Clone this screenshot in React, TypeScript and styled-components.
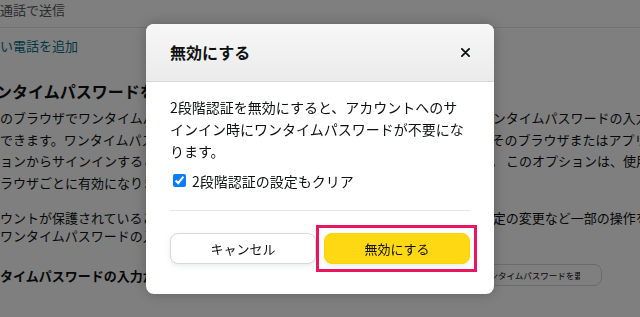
import React from 'react';
import styled, { createGlobalStyle, css } from 'styled-components';

const GlobalStyle = createGlobalStyle`
    html, body {
        margin: 0;
        padding: 0;
        background: #ffffff;
    }
    body {
        font-family: "Noto Sans CJK JP", "Liberation Sans", sans-serif;
        color: #0f1111;
        overflow: hidden;
    }
`;

const para1 = [
    'このブラウザでワンタイムパスワードを入力して認証すると、次回のサインインではワンタイムパスワードの入力を省',
    '略できます。ワンタイムパスワードの入力が不要になるため、次回からもスムーズに、そのブラウザまたはアプリケー',
    'ションからサインインするときに、ワンタイムパスワード( OTP)の入力が省略されます。 このオプションは、使用するブラウザ',
    'ブラウザごとに有効になります。',
];

const para2 = [
    'アカウントが保護されていることを確認するため、パスワードや各種セキュリティ関連設定の変更など一部の操作を行う際には',
    '前にワンタイムパスワードの入力が必要です。',
];

export default function App() {
    return (
        <>
            <GlobalStyle />
            <Page>
                <Content>
                    <TopRow>
                        <Line $shift={-13}>音声通話で送信</Line>
                    </TopRow>
                    <AddLink $shift={-13}>新しい電話を追加</AddLink>
                    <Heading $shift={-7}>ワンタイムパスワードを要求しない</Heading>
                    <Para $lh={21.5}>
                        {para1.map((text) => (
                            <Line key={text}>{text}</Line>
                        ))}
                    </Para>
                    <Para $lh={18} $shift={-13} $top={16}>
                        {para2.map((text) => (
                            <Line key={text}>{text}</Line>
                        ))}
                    </Para>
                    <ActionRow>
                        <ActionLabel>ワンタイムパスワードの入力が必要</ActionLabel>
                        <GhostButton>
                            <GhostText>ワンタイムパスワードを要求しない</GhostText>
                        </GhostButton>
                    </ActionRow>
                </Content>
            </Page>

            <Overlay>
                <Modal>
                    <ModalHeader>
                        <ModalTitle>無効にする</ModalTitle>
                        <CloseButton aria-label="閉じる">
                            <svg width="9" height="9" viewBox="0 0 10 10">
                                <path d="M1 1L9 9M9 1L1 9" stroke="#0f1111" strokeWidth="2" strokeLinecap="round" />
                            </svg>
                        </CloseButton>
                    </ModalHeader>
                    <ModalBody>
                        <Message>
                            2段階認証を無効にすると、アカウントへのサインイン時にワンタイムパスワードが不要になります。
                        </Message>
                        <CheckRow>
                            <CheckBox type="checkbox" defaultChecked />
                            <span>2段階認証の設定もクリア</span>
                        </CheckRow>
                        <Divider />
                        <ButtonRow>
                            <Button $variant="secondary">キャンセル</Button>
                            <Button $variant="primary" $highlight>無効にする</Button>
                        </ButtonRow>
                    </ModalBody>
                </Modal>
            </Overlay>
        </>
    );
}

const Page = styled.div`
    width: 640px;
    height: 317px;
    overflow: hidden;
`;

const Content = styled.div`
    margin-left: -13px;
    width: 700px;
    font-size: 13px;
`;

const Line = styled.div<{ $shift?: number }>`
    white-space: nowrap;
    margin-left: ${({ $shift }) => $shift ?? 0}px;
`;

const TopRow = styled.div`
    height: 27px;
    line-height: 20px;
    color: #565959;
    border-bottom: 1px solid #e3e6e6;
    margin-left: -30px;
    padding-left: 30px;
`;

const AddLink = styled.a<{ $shift?: number }>`
    display: block;
    margin-top: 8px;
    margin-left: ${({ $shift }) => $shift ?? 0}px;
    line-height: 20px;
    color: #007185;
    white-space: nowrap;
    cursor: pointer;
`;

const Heading = styled.h3<{ $shift?: number }>`
    margin: 23px 0 0 ${({ $shift }) => $shift ?? 0}px;
    font-size: 16px;
    line-height: 24px;
    font-weight: 700;
    white-space: nowrap;
`;

const Para = styled.div<{ $lh: number; $shift?: number; $top?: number }>`
    margin-top: ${({ $top }) => $top ?? 4}px;
    margin-left: ${({ $shift }) => $shift ?? 0}px;
    line-height: ${({ $lh }) => $lh}px;
`;

const ActionRow = styled.div`
    margin: 19px 0 0 -13px;
    width: 628px;
    height: 22px;
    display: flex;
    align-items: center;
    justify-content: space-between;
`;

const ActionLabel = styled.div`
    font-weight: 700;
    white-space: nowrap;
`;

const GhostButton = styled.button`
    box-sizing: border-box;
    width: 140px;
    height: 22px;
    padding: 0 21px 0 18px;
    display: flex;
    align-items: center;
    background: #ffffff;
    border: 1px solid #d5d9d9;
    border-radius: 8px;
    font-family: inherit;
    color: #0f1111;
`;

const GhostText = styled.span`
    display: block;
    overflow: hidden;
    white-space: nowrap;
    font-size: 8.5px;
    line-height: 20px;
`;

const Overlay = styled.div`
    position: fixed;
    inset: 0;
    background: rgba(0, 0, 0, 0.5);
    display: flex;
    align-items: center;
    justify-content: center;
`;

const Modal = styled.div`
    width: 348px;
    background: #ffffff;
    border-radius: 8px;
    box-shadow: 0 0 14px rgba(0, 0, 0, 0.25);
    overflow: hidden;
`;

const ModalHeader = styled.div`
    height: 57px;
    padding: 0 22px 0 24px;
    display: flex;
    align-items: center;
    justify-content: space-between;
    background: linear-gradient(#f7f7f7, #ebebeb);
    border-bottom: 1px solid #d5d9d9;
`;

const ModalTitle = styled.h4`
    margin: 0;
    font-size: 16px;
    font-weight: 700;
    color: #0f1111;
`;

const CloseButton = styled.button`
    width: 14px;
    height: 14px;
    padding: 0;
    border: none;
    background: none;
    display: flex;
    align-items: center;
    justify-content: center;
    cursor: pointer;
`;

const ModalBody = styled.div`
    padding: 14px 24px 30px;
    font-size: 14px;
    color: #0f1111;
`;

const Message = styled.p`
    margin: 0;
    line-height: 22px;
`;

const CheckRow = styled.label`
    margin-top: 9px;
    display: flex;
    align-items: center;
    gap: 6px;
    line-height: 20px;
    padding-left: 3px;
`;

const CheckBox = styled.input`
    width: 13px;
    height: 13px;
    margin: 0;
    accent-color: #0a7cff;
`;

const Divider = styled.hr`
    margin: 19px 0 0;
    border: none;
    border-top: 1px solid #e3e6e6;
`;

const ButtonRow = styled.div`
    margin-top: 22px;
    display: grid;
    grid-template-columns: 1fr 1fr;
    gap: 8px;
`;

const Button = styled.button<{ $variant: 'primary' | 'secondary'; $highlight?: boolean }>`
    position: relative;
    height: 31px;
    border-radius: 8px;
    font-family: inherit;
    font-size: 13px;
    color: #0f1111;
    cursor: pointer;
    background: ${({ $variant }) => ($variant === 'primary' ? '#ffd814' : '#ffffff')};
    border: 1px solid ${({ $variant }) => ($variant === 'primary' ? '#fcd200' : '#d5d9d9')};
    box-shadow: 0 2px 5px rgba(213, 217, 217, 0.5);

    ${({ $highlight }) =>
        $highlight &&
        css`
            &::after {
                content: '';
                position: absolute;
                inset: -9px -8px -9px -9px;
                border: 3px solid #e8175d;
                pointer-events: none;
            }
        `}
`;
